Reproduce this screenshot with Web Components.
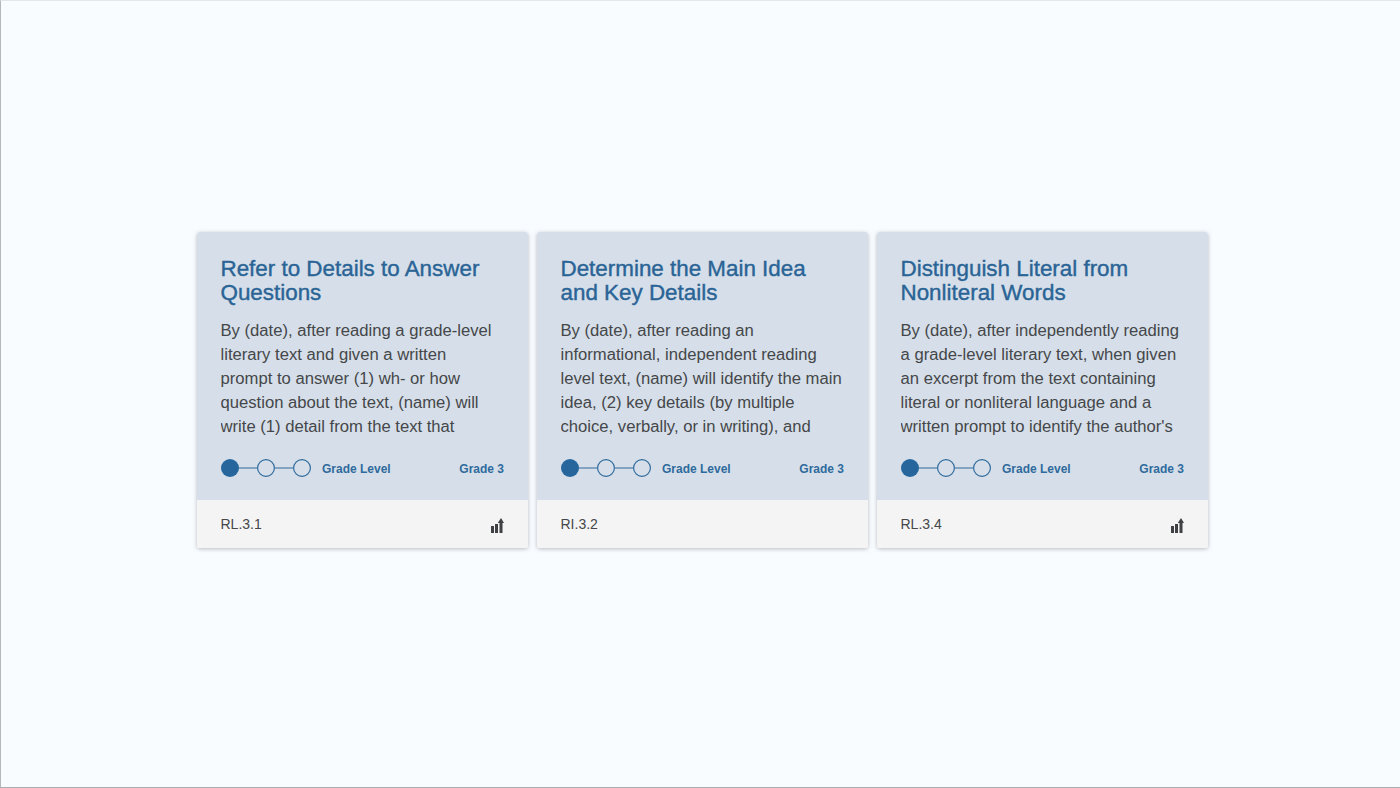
<!DOCTYPE html>
<html>
<head>
<meta charset="utf-8">
<title>Goals</title>
<style>
  html, body { margin: 0; height: 100%; }
  body { background: #f9fcff; font-family: "Liberation Sans", Arial, sans-serif; }
</style>
</head>
<body>
<goal-page>
  <goal-card code="RL.3.1" heading="Refer to Details to Answer Questions">By (date), after reading a grade-level literary text and given a written prompt to answer (1) wh- or how question about the text, (name) will write (1) detail from the text that supports the answer correctly</goal-card>
  <goal-card code="RI.3.2" heading="Determine the Main Idea and Key Details" noicon>By (date), after reading an informational, independent reading level text, (name) will identify the main idea, (2) key details (by multiple choice, verbally, or in writing), and explain how they support it</goal-card>
  <goal-card code="RL.3.4" heading="Distinguish Literal from Nonliteral Words">By (date), after independently reading a grade-level literary text, when given an excerpt from the text containing literal or nonliteral language and a written prompt to identify the author's meaning of the words</goal-card>
</goal-page>

<script>
const GOAL_PAGE_TEMPLATE = `
<style>
  :host { display: block; box-sizing: border-box; height: 788px; padding: 232px 191px 0 197px;
          border-left: 1px solid #b4b8bc; border-bottom: 1px solid #a9acb0; border-top: 1px solid #e4e6e8; margin: 0; }
  .row { display: flex; gap: 9px; margin-left: -1px; margin-top: -1px; }
</style>
<div class="row"><slot></slot></div>
`;

const GOAL_CARD_TEMPLATE = `
<style>
  :host { display: block; width: 331px; flex: none; border-radius: 3px; overflow: hidden;
          box-shadow: 0 1px 4px rgba(60, 70, 80, .35); }
  .top { background: #d6dfe9; height: 268px; box-sizing: border-box; padding: 25px 24px 0 23.5px; }
  h2 { margin: 0; font-size: 22.4px; line-height: 24px; font-weight: 400; color: #2a6496;
       -webkit-text-stroke: .4px #2a6496; }
  .text { margin-top: 14px; width: 281.7px; height: 120px; overflow: hidden; font-size: 16.65px; line-height: 24px; color: #45474a; }
  .level { display: flex; align-items: center; margin-top: 17px; height: 24px;
           font-size: 12px; font-weight: 700; color: #2f6a9c; }
  .level svg { flex: none; margin-left: .5px; margin-right: 11px; }
  .level span { position: relative; top: 1px; }
  .level .grade { margin-left: auto; }
  .foot { display: flex; align-items: center; justify-content: space-between; height: 47px; margin-top: 1px;
          padding: 0 24px 0 23.5px; background: #f4f4f4; font-size: 14px; color: #45474a; }
  .foot .code { position: relative; top: -1px; }
  .foot svg { display: block; margin-top: 1px; }
  .top-wrap { background: #f4f4f4; }
</style>
<div class="top-wrap">
  <div class="top">
    <h2 class="heading"></h2>
    <div class="text"><slot></slot></div>
    <div class="level">
      <svg width="90" height="20" viewBox="0 0 90 20">
        <circle cx="9" cy="10" r="9" fill="#26669c"/>
        <path d="M18 10h18M54 10h18" stroke="#2f6a9c" stroke-width="1.2" fill="none"/>
        <circle cx="45" cy="10" r="8.4" fill="none" stroke="#2f6a9c" stroke-width="1.2"/>
        <circle cx="81" cy="10" r="8.4" fill="none" stroke="#2f6a9c" stroke-width="1.2"/>
      </svg>
      <span>Grade Level</span>
      <span class="grade">Grade 3</span>
    </div>
  </div>
  <div class="foot">
    <span class="code"></span>
    <svg class="icon" width="13" height="15" viewBox="0 0 13 15">
      <path d="M0 8h3v7H0zM4 6h3v9H4zM8.500 5H6.800L10 0l3 5h-1.500v10h-3z" fill="#3f4144"/>
    </svg>
  </div>
</div>
`;

class GoalPage extends HTMLElement {
  constructor() {
    super();
    this.attachShadow({ mode: "open" }).innerHTML = GOAL_PAGE_TEMPLATE;
  }
}

class GoalCard extends HTMLElement {
  constructor() {
    super();
    this.attachShadow({ mode: "open" }).innerHTML = GOAL_CARD_TEMPLATE;
  }
  connectedCallback() {
    this.shadowRoot.querySelector(".heading").textContent = this.getAttribute("heading");
    this.shadowRoot.querySelector(".code").textContent = this.getAttribute("code");
    if (this.hasAttribute("noicon")) this.shadowRoot.querySelector(".icon").style.visibility = "hidden";
  }
}

customElements.define("goal-page", GoalPage);
customElements.define("goal-card", GoalCard);
</script>
</body>
</html>
